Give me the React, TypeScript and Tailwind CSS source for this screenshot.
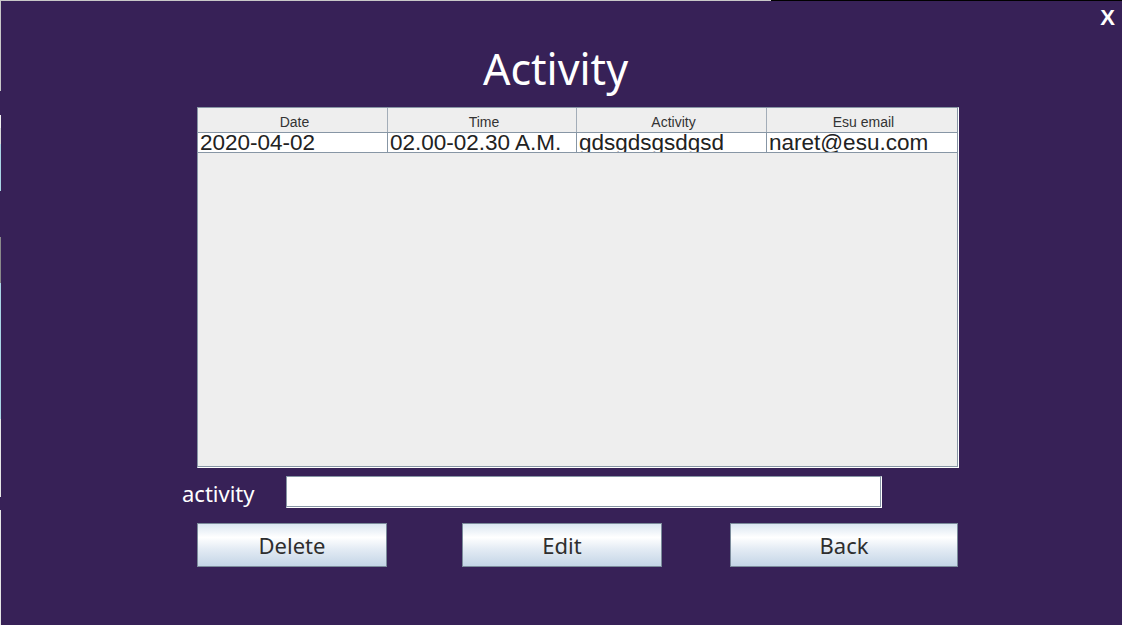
import React from "react";

const cols = [
  { w: "w-[190px]", h: "Date", v: "2020-04-02" },
  { w: "w-[189px]", h: "Time", v: "02.00-02.30 A.M." },
  { w: "w-[190px]", h: "Activity", v: "gdsgdsgsdgsd" },
  { w: "w-[189px]", h: "Esu email", v: "naret@esu.com" },
];

function Btn({ label, w, ml }: { label: string; w: string; ml: string }) {
  return (
    <div
      className={`${w} ${ml} h-[44px] border border-[#7b8b9b] bg-[linear-gradient(to_bottom,#dbe6f1_0%,#ffffff_32%,#e3ebf4_60%,#c4d5e6_100%)] flex items-center justify-center text-[22px] leading-none text-[#2e2e2e]`}
      style={{ fontFamily: '"Noto Sans", "Open Sans", sans-serif' }}
    >
      {label}
    </div>
  );
}

export default function App() {
  return (
    <div
      className="w-[1122px] h-[625px] bg-[#372157] flex flex-col overflow-hidden"
      style={{ fontFamily: '"Noto Sans", "Open Sans", sans-serif' }}
    >
      <div className="h-px flex shrink-0">
        <div className="w-[771px] bg-[#c8c8c8]" />
        <div className="flex-1 bg-black" />
      </div>
      <div className="flex-1 flex">
        <div className="w-px flex flex-col shrink-0">
          <div className="h-[90px] bg-[#c8c8c8]" />
          <div className="h-[24px]" />
          <div className="h-[13px] bg-[#f0f0f0]" />
          <div className="h-[16px] bg-[#d8d8d8]" />
          <div className="h-[47px] bg-[#a9d6e6]" />
          <div className="h-[46px]" />
          <div className="h-[46px] bg-[#8a8a8a]" />
          <div className="h-[136px] bg-[#a9d6e6]" />
          <div className="h-[78px] bg-[#e6e6e6]" />
          <div className="h-[13px]" />
          <div className="flex-1 bg-[#e6e6e6]" />
        </div>
        <div className="flex-1 flex flex-col">
          <div className="h-[46px] flex justify-end items-start pt-[6px] pr-[7px]">
            <span
              className="text-white font-bold text-[22px] leading-none"
              style={{ fontFamily: '"Liberation Sans", Arial, sans-serif' }}
            >
              X
            </span>
          </div>
          <div className="h-[60px] flex justify-center pr-[12px]">
            <span className="text-white text-[43px] leading-none">Activity</span>
          </div>
          <div className="ml-[196px] w-[762px] h-[361px] border-t border-l border-[#8796a5] border-r-white border-b-white border-r border-b">
            <div className="w-full h-full border-r border-b border-[#8796a5] bg-[#eeeeee] flex flex-col">
              <div
                className="flex h-[25px] border-b border-[#8796a5]"
                style={{ fontFamily: '"Liberation Sans", Arial, sans-serif' }}
              >
                {cols.map((c, i) => (
                  <div
                    key={c.h}
                    className={`${c.w} ${i < 3 ? "border-r border-[#a3adb8]" : ""} text-[14px] leading-none text-[#333333] flex justify-center pt-[7px] pl-[4px]`}
                  >
                    {c.h}
                  </div>
                ))}
              </div>
              <div
                className="flex h-[20px] border-b border-[#8796a5] bg-white"
                style={{ fontFamily: '"Liberation Sans", Arial, sans-serif' }}
              >
                {cols.map((c, i) => (
                  <div
                    key={c.h}
                    className={`${c.w} ${i < 3 ? "border-r border-[#8796a5]" : ""} overflow-hidden text-[22.5px] leading-none text-[#222222] pl-[2px] whitespace-nowrap`}
                  >
                    <div className="-mt-[1px]">{c.v}</div>
                  </div>
                ))}
              </div>
            </div>
          </div>
          <div className="mt-[8px] h-[32px] flex items-center">
            <div className="ml-[181px] w-[104px] text-white text-[22px] leading-none pt-[2px]">
              activity
            </div>
            <div className="w-[596px] h-[32px] border-t border-l border-[#8796a5] border-r border-b border-r-white border-b-white">
              <div className="w-full h-full bg-white border-r border-b border-[#8796a5]" />
            </div>
          </div>
          <div className="mt-[15px] flex">
            <Btn label="Delete" w="w-[190px]" ml="ml-[196px]" />
            <Btn label="Edit" w="w-[200px]" ml="ml-[75px]" />
            <Btn label="Back" w="w-[228px]" ml="ml-[68px]" />
          </div>
        </div>
      </div>
    </div>
  );
}
